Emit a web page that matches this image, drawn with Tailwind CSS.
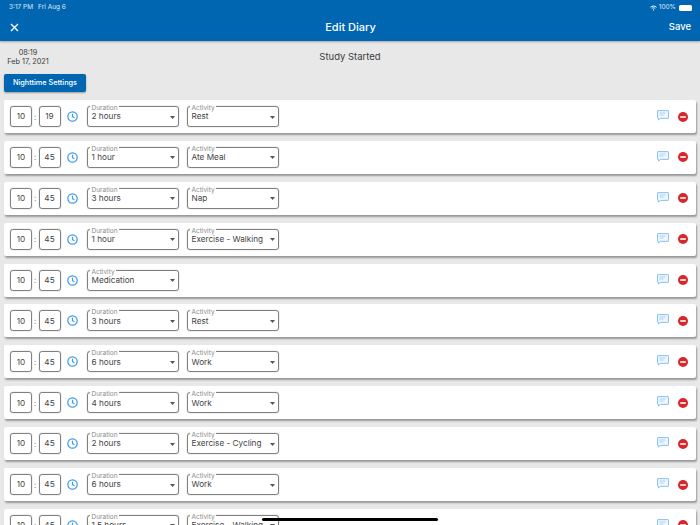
<!DOCTYPE html>
<html lang="en">
<head>
  <meta charset="UTF-8">
  <meta name="viewport" content="width=device-width, initial-scale=1.0">
  <title>Edit Diary</title>
  <script src="https://cdn.jsdelivr.net/npm/@tailwindcss/browser@4"></script>
</head>
<body class="w-[700px] h-[525px] overflow-hidden relative bg-[#e8e8e8] font-[Inter,sans-serif] text-[#3c3c3c]">
  <!-- Header -->
  <header class="h-[41px] bg-[#0066b2] text-white shadow-[0_1px_2px_rgba(0,0,0,0.3)] relative">
    <div class="h-[13px] flex items-center justify-between pl-[9px] pr-[8px] text-[6.5px] text-white/85 pt-[2px]">
      <div class="flex gap-[5px]"><span>3:17 PM</span><span>Fri Aug 6</span></div>
      <div class="flex items-center gap-[2px]">
        <svg width="7" height="6" viewBox="0 0 14 11" fill="none" stroke="white" stroke-width="2"><path d="M1 4c3.500-3.200 8.500-3.200 12 0M3.500 6.500c2-1.800 5-1.800 7 0"/><circle cx="7" cy="9.300" r="1.200" fill="white" stroke="none"/></svg>
        <span>100%</span>
        <div class="w-[13px] h-[6px] rounded-[1.5px] bg-white ml-[1px]"></div>
      </div>
    </div>
    <div class="h-[28px] grid grid-cols-3 items-center pl-[10px] pr-[9px]">
      <svg width="9" height="9" viewBox="0 0 9 9" stroke="white" stroke-width="1.400"><path d="M1 1l7 7M8 1l-7 7"/></svg>
      <span class="text-[11px] font-medium text-center">Edit Diary</span>
      <span class="text-[9.500px] font-medium text-right">Save</span>
    </div>
  </header>

  <!-- Study info -->
  <div class="h-[33px] flex items-center relative">
    <div class="w-[51px] ml-[2.500px] text-center text-[7.300px] leading-[9px] pb-[2px]">
      <div>08:19</div>
      <div class="whitespace-nowrap">Feb 17, 2021</div>
    </div>
    <div class="absolute left-0 right-0 top-[9.500px] text-center text-[9.500px] leading-[12px]">Study Started</div>
  </div>
  <div class="px-[4px] flex">
    <button class="w-[82px] h-[18px] pt-[1px] rounded-[2px] bg-[#0066b2] text-white text-[7.300px] font-medium shadow-[0_1px_2px_rgba(0,0,0,0.35)]">Nighttime Settings</button>
  </div>

  <div id="rows" class="mt-[8px] px-[4px] flex flex-col gap-[7.900px]"></div>

  <!-- Home indicator -->
  <div class="absolute left-[262px] top-[518px] w-[176px] h-[3px] rounded-full bg-black"></div>

  <script>
    const rows = [
      ['19', '2 hours', 'Rest'],
      ['45', '1 hour', 'Ate Meal'],
      ['45', '3 hours', 'Nap'],
      ['45', '1 hour', 'Exercise - Walking'],
      ['45', null, 'Medication'],
      ['45', '3 hours', 'Rest'],
      ['45', '6 hours', 'Work'],
      ['45', '4 hours', 'Work'],
      ['45', '2 hours', 'Exercise - Cycling'],
      ['45', '6 hours', 'Work'],
      ['45', '1.5 hours', 'Exercise - Walking']
    ];
    const timeBox = v => `<div class="w-[22px] h-[21px] border border-[#808080] shadow-[0_0_1px_rgba(0,0,0,0.5)] rounded-[3px] flex items-center justify-center text-[8.200px] text-[#444]">${v}</div>`;
    const select = (label, value) => `
      <div class="relative w-[92px] h-[21px] border border-[#808080] shadow-[0_0_1px_rgba(0,0,0,0.5)] rounded-[3px] flex items-center pl-[3.500px] text-[8.200px] text-[#444]">
        <span class="absolute left-[2px] top-[-2px] px-[1.500px] bg-white text-[6.500px] leading-[6px] text-[#8a8a8a]">${label}</span>
        <span class="whitespace-nowrap">${value}</span>
        <svg class="absolute right-[3.500px] top-[8.500px]" width="5" height="3" viewBox="0 0 5 3"><path d="M0 0h5L2.500 3z" fill="#555"/></svg>
      </div>`;
    const clock = `<svg class="ml-[6.500px]" width="11" height="11" viewBox="0 0 11 11" fill="none" stroke="#3d9bec" stroke-width="1.200"><circle cx="5.500" cy="5.500" r="4.700"/><path d="M5.500 2.800v2.900l2 1.100"/></svg>`;
    const comment = `<svg class="mt-[-2px]" width="12" height="11" viewBox="0 0 12 11" fill="none"><path d="M1 .6h10a.5.5 0 0 1 .5.5v6.800a.5.5 0 0 1-.5.5H3.500L1.500 10V8.400H1a.5.5 0 0 1-.5-.5V1.100A.5.5 0 0 1 1 .6z" fill="#eef6fd" stroke="#7dbcf0" stroke-width=".9"/><path d="M2.500 3h6M2.500 5h4" stroke="#a9d2f5"/></svg>`;
    const remove = `<svg width="10" height="10" viewBox="0 0 10 10"><circle cx="5" cy="5" r="5" fill="#d9262c"/><rect x="2.200" y="4.200" width="5.600" height="1.600" fill="white"/></svg>`;
    document.getElementById('rows').innerHTML = rows.map(([min, dur, act]) => `
      <div class="h-[33px] shrink-0 bg-white rounded-[2px] shadow-[1px_2px_2px_rgba(0,0,0,0.35)] flex items-center pl-[6px] pr-[8px]">
        ${timeBox('10')}
        <span class="w-[6.500px] text-center text-[8px] text-[#777]">:</span>
        ${timeBox(min)}
        ${clock}
        <div class="ml-[9px] flex gap-[8px]">
          ${dur ? select('Duration', dur) : ''}
          ${select('Activity', act)}
        </div>
        <div class="ml-auto flex items-center gap-[9px]">${comment}${remove}</div>
      </div>`).join('');
  </script>
</body>
</html>
